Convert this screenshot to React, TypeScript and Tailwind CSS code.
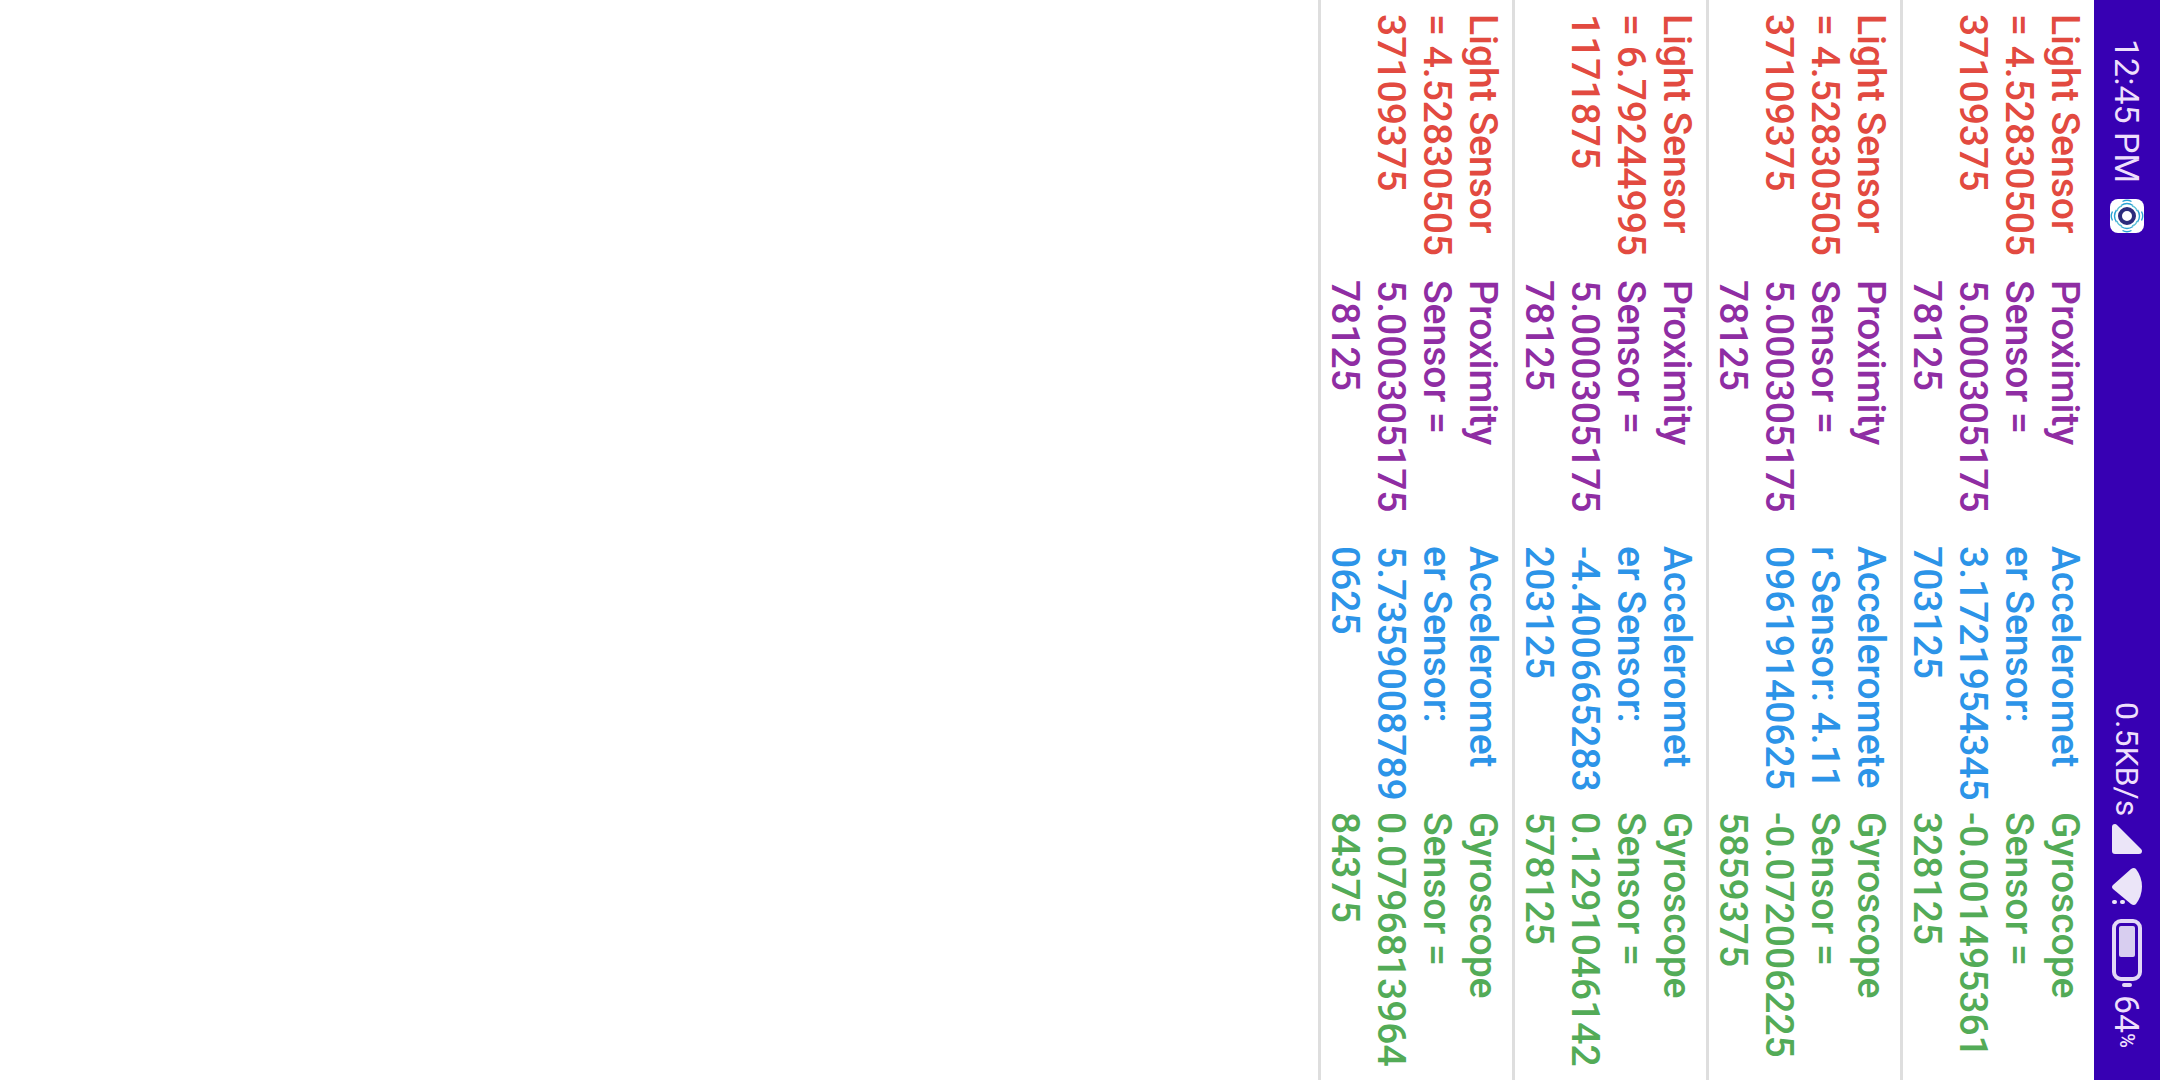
type Reading = { light: string[]; proximity: string[]; accelerometer: string[]; gyroscope: string[] };

const proximity = ["Proximity", "Sensor =", "5.000305175", "78125"];

const readings: Reading[] = [
  {
    light: ["Light Sensor", "= 4.52830505", "37109375"],
    proximity,
    accelerometer: ["Acceleromet", "er Sensor:", "3.1721954345", "703125"],
    gyroscope: ["Gyroscope", "Sensor =", "-0.001495361", "328125"],
  },
  {
    light: ["Light Sensor", "= 4.52830505", "37109375"],
    proximity,
    accelerometer: ["Acceleromete", "r Sensor: 4.11", "09619140625"],
    gyroscope: ["Gyroscope", "Sensor =", "-0.072006225", "5859375"],
  },
  {
    light: ["Light Sensor", "= 6.79244995", "1171875"],
    proximity,
    accelerometer: ["Acceleromet", "er Sensor:", "-4.400665283", "203125"],
    gyroscope: ["Gyroscope", "Sensor =", "0.1291046142", "578125"],
  },
  {
    light: ["Light Sensor", "= 4.52830505", "37109375"],
    proximity,
    accelerometer: ["Acceleromet", "er Sensor:", "5.7359008789", "0625"],
    gyroscope: ["Gyroscope", "Sensor =", "0.0796813964", "84375"],
  },
];

function Cell({ lines, color }: { lines: string[]; color: string }) {
  return (
    <p className={`whitespace-nowrap ${color}`}>
      {lines.map((line, i) => (
        <span key={i} className="block">
          {line}
        </span>
      ))}
    </p>
  );
}

function AppIcon() {
  return (
    <svg width="34" height="34" viewBox="0 0 34 34" aria-hidden="true">
      <rect width="34" height="34" rx="8" fill="#fff" />
      <g fill="none" stroke="#2ba3d4" strokeWidth="1.4">
        <path d="M11 6.5Q17 2.5 23 6.5M12.5 2.5Q17 0 21.500 2.500M11 27.500Q17 31.500 23 27.500M12.500 31.500Q17 34 21.500 31.500" />
        <path d="M6.500 11Q2.500 17 6.500 23M2.500 12.500Q0 17 2.500 21.500M27.500 11Q31.500 17 27.500 23M31.500 12.500Q34 17 31.500 21.500" />
        <path d="M7 12Q8 8 12 7M22 7Q26 8 27 12M27 22Q26 26 22 27M12 27Q8 26 7 22" stroke="#5fc3d8" />
      </g>
      <circle cx="17" cy="17" r="7" fill="#fff" stroke="#2c2c7c" strokeWidth="4" />
    </svg>
  );
}

function SignalIcon() {
  return (
    <svg width="30" height="30" viewBox="0 0 30 30" aria-hidden="true">
      <path d="M0 3Q0 0 3 0Q4 0 5 1L29 25Q30 26 30 27Q30 30 27 30H3Q0 30 0 27Z" fill="#ebe5f8" />
    </svg>
  );
}

function WifiIcon() {
  return (
    <svg width="30" height="37" viewBox="0 0 30 37" aria-hidden="true">
      <path
        d="M1 17L19 1Q22-1 24 1Q30 9 30 18.500Q30 28 24 36Q22 38 19 36L1 21Q-1 19 1 17Z"
        fill="#ebe5f8"
      />
      <rect x="0" y="32" width="5" height="4" rx="2" fill="#ebe5f8" />
      <rect x="8" y="32" width="5" height="4" rx="2" fill="#ebe5f8" />
    </svg>
  );
}

function BatteryIcon() {
  return (
    <svg width="30" height="68" viewBox="0 0 30 68" aria-hidden="true">
      <rect x="2" y="2" width="26" height="58" rx="7" fill="none" stroke="#e3d8f6" strokeWidth="4" />
      <rect x="7" y="7" width="16" height="31" rx="2" fill="#d8cef0" />
      <rect x="10" y="64" width="10" height="4" rx="2" fill="#e3d8f6" />
    </svg>
  );
}

export default function App() {
  return (
    <div className="flex h-screen w-full flex-col bg-white font-['Roboto',sans-serif] [writing-mode:vertical-rl]">
      <header className="flex w-[66px] items-center justify-between bg-[#3700b3] pt-[39px] pb-8 whitespace-nowrap text-[#eedffc]">
        <div className="flex items-center gap-4">
          <time className="text-[34px] leading-[40px]">12:45 PM</time>
          <AppIcon />
        </div>
        <div className="flex items-center">
          <span className="text-[32px] leading-[40px]">0.5KB/s</span>
          <span className="mt-2 flex items-center gap-[14px]">
            <SignalIcon />
            <WifiIcon />
            <BatteryIcon />
          </span>
          <span className="mt-2 text-[34px] leading-[40px]">
            64<span className="text-[20px] font-medium">%</span>
          </span>
        </div>
      </header>
      <main>
        <ul>
          {readings.map((r, i) => (
            <li
              key={i}
              className="grid w-[194px] grid-cols-4 border-l-[3px] border-[#dedede] pt-[14px] pr-[6px] pb-[2px] text-[39px] leading-[46px] font-medium"
            >
              <Cell lines={r.light} color="text-[#e24a40]" />
              <Cell lines={r.proximity} color="text-[#8f2da3]" />
              <Cell lines={r.accelerometer} color="text-[#2c94e8]" />
              <Cell lines={r.gyroscope} color="text-[#53ab57]" />
            </li>
          ))}
        </ul>
      </main>
    </div>
  );
}
